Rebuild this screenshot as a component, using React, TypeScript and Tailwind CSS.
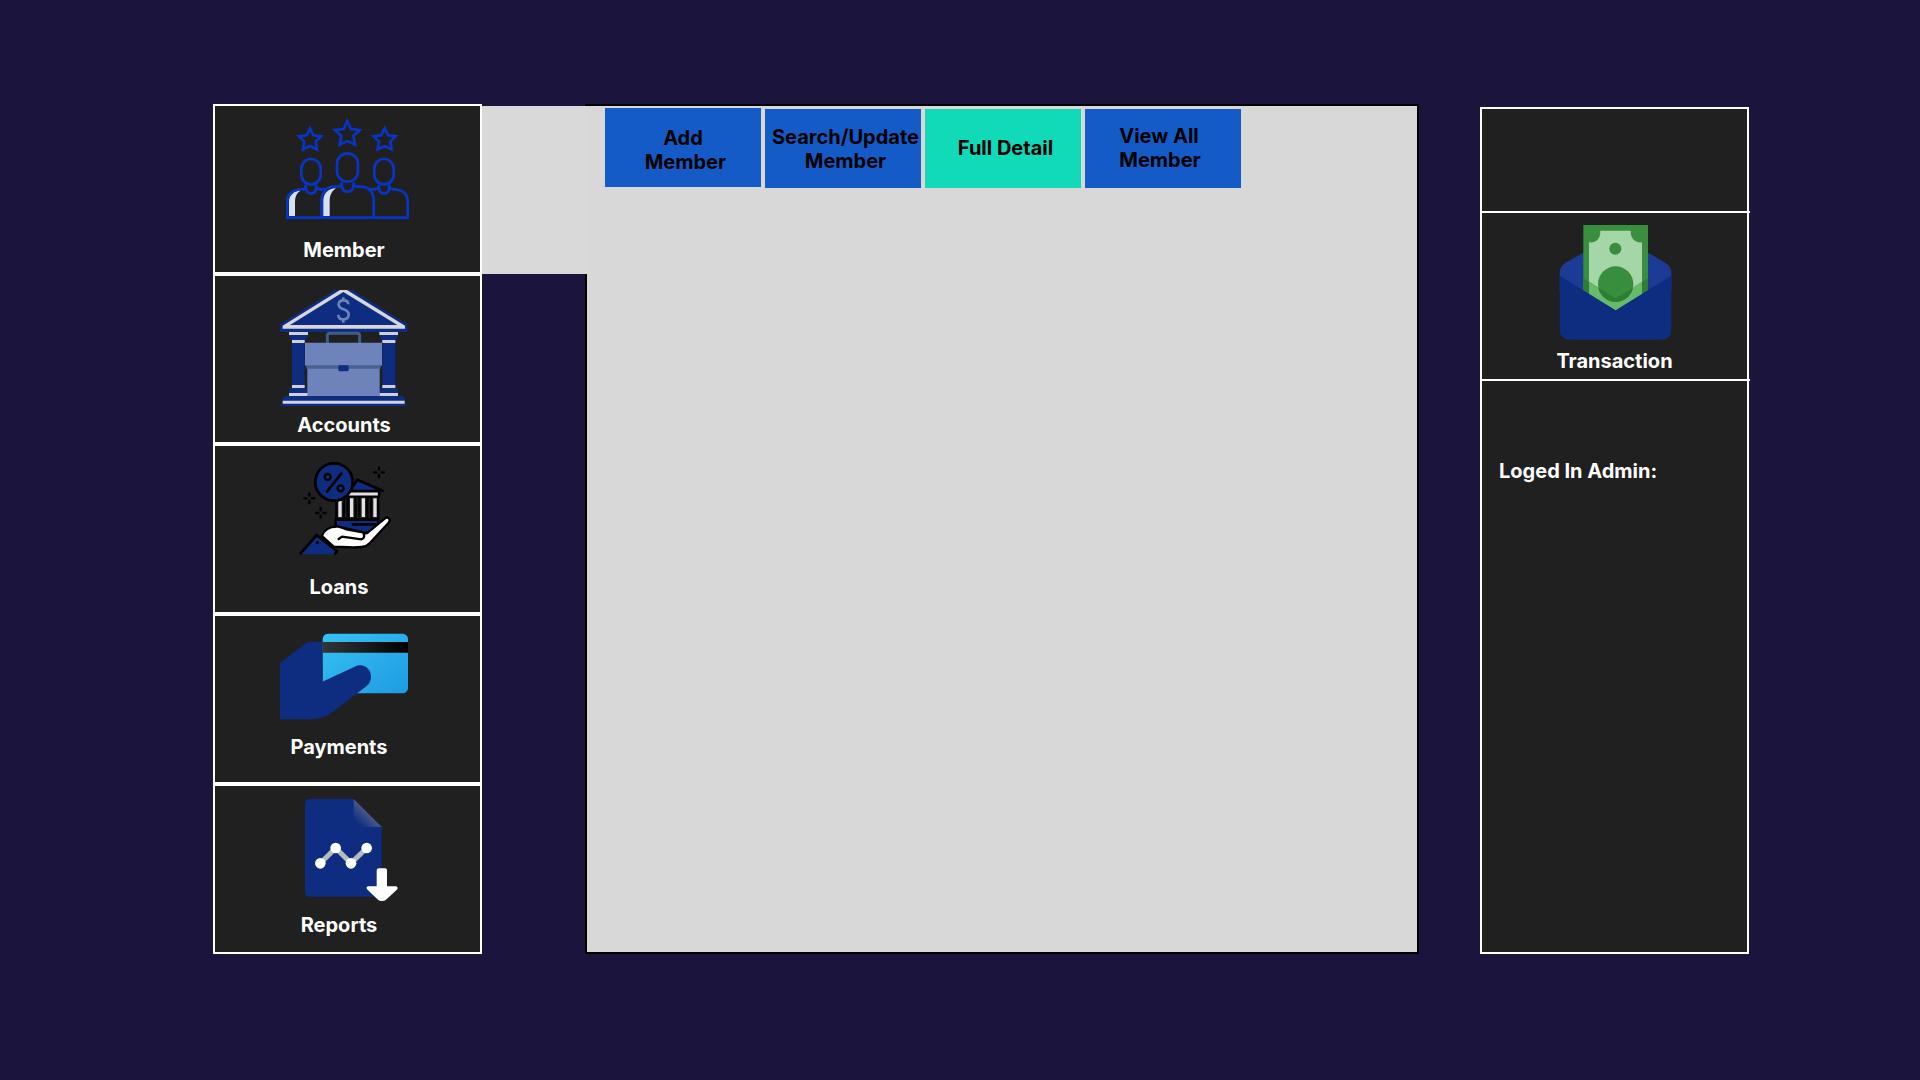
import type { ReactNode } from 'react';

function MemberIcon() {
  return (
    <svg aria-hidden="true" viewBox="222 69 390 360" className="h-[120px] w-[130px] shrink-0">
      <g fill="none" stroke="#0735c8" strokeWidth="8">
        <path d="M427 78 L438 102 L464 105 L445 123 L450 149 L427 138 L404 149 L409 123 L390 105 L416 102 Z" />
        <path d="M315 100 L325 121 L348 124 L332 140 L336 163 L315 153 L294 163 L298 140 L282 124 L305 121 Z" />
        <path d="M539 100 L549 121 L572 124 L556 140 L560 163 L539 153 L518 163 L522 140 L506 124 L529 121 Z" />
        <rect x="289" y="192" width="58" height="76" rx="29" />
        <rect x="396" y="175" width="63" height="85" rx="31" />
        <rect x="508" y="192" width="58" height="76" rx="29" />
        <path d="M302 268 C304 276 303 283 291 283 C264 283 247 297 247 320 V368 H350" />
        <path d="M302 270 C301 287 308 296 318 296 C329 296 335 287 334 270 M334 277 C338 284 346 283 364 283" />
        <path d="M521 270 C520 287 527 296 537 296 C548 296 554 287 553 270 M521 277 C517 284 508 283 493 283" />
        <path d="M553 268 C552 276 554 283 566 283 C592 283 608 297 608 320 V368 H506" />
        <path d="M410 262 C410 273 408 275 389 275 C364 275 350 293 350 316 V368 H506 V316 C506 291 490 275 467 275 C448 275 446 273 446 262" />
        <path d="M409 266 C410 282 416 290 427 290 C439 290 446 281 446 266" />
      </g>
      <path d="M252 363 V320 C252 300 267 288 286 287 C272 296 270 309 270 324 V363 Z" fill="#d6e0f5" />
      <path d="M355 363 V318 C355 296 368 281 393 280 C376 291 374 307 374 322 V363 Z" fill="#d6e0f5" />
    </svg>
  );
}

function AccountsIcon() {
  return (
    <svg aria-hidden="true" viewBox="222 69 390 375" className="h-[125px] w-[130px] shrink-0">
      <path d="M390 75 H441 L607 178 V201 H225 V178 Z" fill="#0e2c80" />
      <path d="M237 184 L409 75 H421 L594 184 Z" fill="#0e2c80" />
      <path d="M405 75 H426 L600 182 V191 H233 V182 Z M415 81 L255 180 H577 Z" fill="#d5d7dc" fillRule="evenodd" />
      <path d="M430 118 C430 108 424 106 415 106 C406 106 401 111 401 119 C401 136 431 130 431 148 C431 158 424 163 415 163 C406 163 400 158 400 149 M415 97 V107 M415 162 V173" fill="none" stroke="#6e83ba" strokeWidth="8" />
      <path d="M252 201 H309 C309 215 304 225 299 225 H261 C255 223 252 214 252 201 Z M523 201 H579 C579 215 575 225 571 225 H532 C527 223 523 214 523 201 Z" fill="#0e2c80" />
      <path d="M261 225 H299 V370 L308 372 V393 H252 V372 L261 370 Z M532 225 H571 V370 L579 372 V393 H523 V372 L532 370 Z" fill="#0e2c80" />
      <path d="M252 201 H309 V210 H252 Z M523 201 H579 V210 H523 Z M261 225 H299 V234 H261 Z M532 225 H571 V234 H532 Z M261 360 H299 V369 H261 Z M532 360 H571 V369 H532 Z M252 384 H309 V393 H252 Z M523 384 H579 V393 H523 Z" fill="#cdd0d8" />
      <path d="M367 234 V213 Q367 205 375 205 H456 Q464 205 464 213 V234" fill="none" stroke="#3f5d8b" strokeWidth="9" />
      <path d="M300 233 H531 V302 H524 V393 H307 V302 H300 Z" fill="#6e83ba" />
      <path d="M304 301 H527 V311 H304 Z" fill="#486191" />
      <rect x="400" y="301" width="31" height="18" rx="4" fill="#0e2c80" />
      <path d="M238 393 H593 L600 401 V416 L607 423 H224 L232 416 V401 Z" fill="#0e2c80" />
      <path d="M233 407 H599 V416 H233 Z" fill="#d0d3dc" />
    </svg>
  );
}

function LoansIcon() {
  return (
    <svg aria-hidden="true" viewBox="222 69 390 351" className="h-[117px] w-[130px] shrink-0">
      <g stroke="#000" strokeWidth="8" strokeLinecap="round" strokeLinejoin="round">
        <path d="M440 160 L457 134 L534 168 H435 Z" fill="#0e2c80" />
        <path d="M428 169 H522 V185 H428 Z" fill="#e4e1e4" strokeWidth="7" />
        <path d="M398 188 H518 V252 H398 Z" fill="#202020" stroke="none" />
        <path d="M394 200 V250 M417 190 V250 M428 190 V250 M452 190 V250 M463 190 V250 M487 190 V250 M498 190 V250 M520 188 V250" strokeWidth="7" fill="none" />
        <path d="M405 198 V246 M440 190 V246 M475 190 V246 M510 190 V246" stroke="#e4e1e4" strokeWidth="10" strokeLinecap="butt" />
        <path d="M392 254 H520 V278 L482 294 L392 274 Z" fill="#0e2c80" />
        <path d="M444 268 H512" fill="none" />
        <circle cx="387" cy="141" r="56" fill="#0e2c80" />
        <path d="M409 116 L366 170" fill="none" />
        <circle cx="368" cy="126" r="9" fill="none" strokeWidth="7" />
        <circle cx="407" cy="160" r="9" fill="none" strokeWidth="7" />
        <path d="M287 355 L335 300 L396 349 L390 356" fill="#0e2c80" />
        <path d="M351 303 C358 282 376 274 399 275 C409 276 418 282 428 284 L469 291 C479 294 482 298 488 293 L540 250 C549 243 559 254 551 263 L494 325 C488 332 480 335 470 336 C445 339 416 336 386 335 Z" fill="#fff" strokeWidth="7" />
        <path d="M401 312 L411 305 L469 313 C480 310 478 301 476 297" fill="none" strokeWidth="7" />
        <path d="M522 97 V104 M522 120 V127 M507 112 H514 M530 112 H537 M313 175 V182 M313 198 V205 M298 190 H305 M321 190 H328 M347 219 V226 M347 242 V248 M333 234 H340 M355 234 H362" strokeWidth="7" />
      </g>
      <circle cx="337" cy="323" r="5" fill="#000" />
      <path d="M293 352 H388 V358 H293 Z" fill="#0e2c80" />
    </svg>
  );
}

function PaymentsIcon() {
  return (
    <svg aria-hidden="true" viewBox="222 69 390 321" className="h-[107px] w-[130px] shrink-0">
      <defs>
        <linearGradient id="card-face" x1="0" y1="0" x2="1" y2="1">
          <stop offset="0" stopColor="#36c2f3" />
          <stop offset="1" stopColor="#1e9be2" />
        </linearGradient>
        <linearGradient id="card-stripe">
          <stop offset="0" stopColor="#333638" />
          <stop offset="1" stopColor="#000" />
        </linearGradient>
      </defs>
      <rect x="353" y="86" width="256" height="179" rx="16" fill="url(#card-face)" />
      <path d="M353 111 H609 V143 H353 Z" fill="url(#card-stripe)" />
      <path d="M225 175 L291 123 C303 113 309 110 321 110 H352 V230 L449 185 C476 172 498 191 498 215 C498 228 493 237 481 246 L387 318 C363 337 342 343 313 343 H225 Z" fill="#0e2c80" />
    </svg>
  );
}

function ReportsIcon() {
  return (
    <svg aria-hidden="true" viewBox="222 69 390 345" className="h-[115px] w-[130px] shrink-0">
      <defs>
        <linearGradient id="page-fold" gradientUnits="userSpaceOnUse" x1="490" y1="114" x2="458" y2="146">
          <stop offset="0" stopColor="#4a5888" />
          <stop offset="1" stopColor="#0e2c80" />
        </linearGradient>
      </defs>
      <path d="M315 72 H446 L530 156 V365 H315 Q300 365 300 350 V87 Q300 72 315 72 Z" fill="#0e2c80" />
      <path d="M446 72 L530 156 H461 Q446 156 446 141 Z" fill="url(#page-fold)" />
      <path d="M346 265 L392 219 L438 265 L485 219" fill="none" stroke="#b5bcc0" strokeWidth="15" />
      <g fill="#fff">
        <circle cx="346" cy="265" r="16" />
        <circle cx="392" cy="219" r="16" />
        <circle cx="438" cy="265" r="16" />
        <circle cx="485" cy="219" r="16" />
        <path d="M522 280 H540 Q546 280 546 286 V334 H573 Q580 337 577 343 L543 374 Q539 378 530 378 Q524 378 519 374 L486 343 Q482 337 489 334 H515 V286 Q515 280 522 280 Z" />
      </g>
    </svg>
  );
}

function TransactionIcon() {
  return (
    <svg aria-hidden="true" viewBox="237 48 393 384" className="h-[128px] w-[131px] shrink-0">
      <path d="M340 143 H534 L586 173 Q604 184 604 204 V260 H269 V204 Q269 184 287 173 Z" fill="#1c3b94" />
      <path d="M340 60 H534 V260 L437 320 L340 260 Z" fill="#3a8f3e" />
      <path d="M391 77 H482 C481 97 492 114 516 112 V275 H357 V112 C378 114 392 102 391 77 Z" fill="#a5d6a7" />
      <circle cx="436" cy="131" r="18" fill="#388e3c" />
      <path d="M340 220 L437 280 L534 220 V262 L437 320 L340 262 Z" fill="#2e7d32" />
      <path d="M357 231 L437 280 L516 231 V270 L437 320 L357 270 Z" fill="#66bb6a" />
      <circle cx="437" cy="237" r="53" fill="#388e3c" />
      <path d="M385 248 L437 280 L489 248 A53 53 0 0 1 385 248 Z" fill="#2e7d32" />
      <path d="M269 212 L437 316 L604 212 V373 Q604 404 573 404 H300 Q269 404 269 373 Z" fill="#0e2c80" />
    </svg>
  );
}

type NavItem = { label: string; icon: ReactNode; labelClass: string };

const navItems: NavItem[] = [
  { label: 'Member', icon: <MemberIcon />, labelClass: '' },
  { label: 'Accounts', icon: <AccountsIcon />, labelClass: '' },
  { label: 'Loans', icon: <LoansIcon />, labelClass: 'pr-[10px]' },
  { label: 'Payments', icon: <PaymentsIcon />, labelClass: 'pr-[10px]' },
  { label: 'Reports', icon: <ReportsIcon />, labelClass: 'pr-[10px]' },
];

const tabBase = 'flex h-[79px] w-[156px] items-center justify-center text-black';

export default function App() {
  return (
    <div className="flex min-h-screen items-stretch bg-[#1b143d] pt-[104px] pr-[171px] pb-[126px] pl-[213px] font-['Inter',sans-serif] text-[20px] leading-6 font-bold text-white">
      <nav aria-label="Main" className="flex w-[269px] shrink-0 flex-col">
        {navItems.map((item) => (
          <button
            key={item.label}
            type="button"
            className="flex min-h-[170px] flex-1 flex-col items-center border-2 border-white bg-[#202020] pt-3 pr-[7px]"
          >
            {item.icon}
            <span className={item.labelClass}>{item.label}</span>
          </button>
        ))}
      </nav>

      <div className="relative z-10 mt-[2px] -mr-[2px] h-[168px] w-[105px] shrink-0 bg-[#d9d9d9]" />

      <main className="min-w-0 flex-1 border-2 border-black bg-[#d8d8d8]">
        <div role="tablist" aria-label="Member actions" className="flex items-start gap-1 pt-[3px] pl-[18px]">
          <button type="button" role="tab" aria-selected="false" className={`${tabBase} -mt-px bg-[#155bc7] pt-[5px]`}>
            <span>
              Add
              <br />
              &nbsp;Member
            </span>
          </button>
          <button type="button" role="tab" aria-selected="false" className={`${tabBase} bg-[#155bc7] pt-px pl-[5px]`}>
            <span>
              Search/Update
              <br />
              Member
            </span>
          </button>
          <button type="button" role="tab" aria-selected="true" className={`${tabBase} bg-[#10dab8] pb-px pl-[5px]`}>
            Full Detail
          </button>
          <button type="button" role="tab" aria-selected="false" className={`${tabBase} bg-[#155bc7] pr-[6px] pb-[2px]`}>
            <span className="text-left">
              View All
              <br />
              Member
            </span>
          </button>
        </div>
      </main>

      <aside className="mt-[3px] ml-[61px] flex w-[269px] shrink-0 flex-col border-2 border-white bg-[#202020]">
        <div className="h-[102px]" />
        <button
          type="button"
          className="-mr-[3px] flex h-[170px] flex-col items-center border-y-2 border-white pt-2 pr-[3px]"
        >
          <TransactionIcon />
          <span>Transaction</span>
        </button>
        <p className="pt-[78px] pl-[17px]">Loged In Admin:</p>
      </aside>
    </div>
  );
}
